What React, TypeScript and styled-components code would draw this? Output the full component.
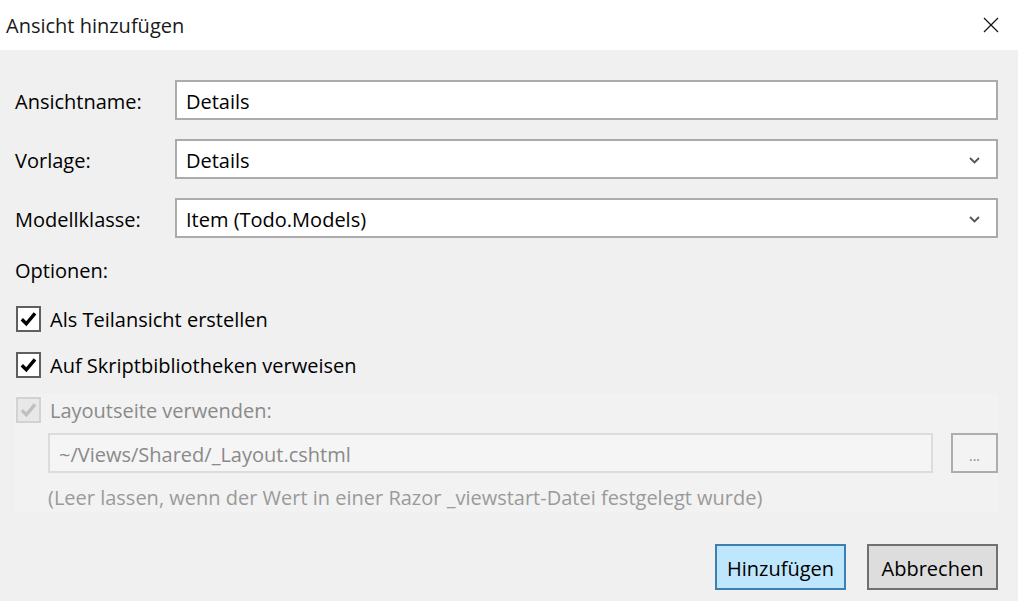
import React from "react";
import styled, { createGlobalStyle } from "styled-components";

const Global = createGlobalStyle`
  html, body { margin: 0; padding: 0; }
  body { font-family: "Open Sans", "Noto Sans", sans-serif; background: #f0f0f0; }
`;

const Dialog = styled.div`
  width: 1018px;
  height: 601px;
  display: flex;
  flex-direction: column;
  background: #f0f0f0;
  color: #000;
  overflow: hidden;
`;

const TitleBar = styled.div`
  height: 50px;
  background: #fff;
  display: flex;
  align-items: center;
  justify-content: space-between;
  padding: 0 19px 0 6px;
  box-sizing: border-box;
`;

const Title = styled.div`
  font-size: 20px;
  color: #1a1a1a;
  margin-top: 1px;
`;

const Body = styled.div`
  display: flex;
  flex-direction: column;
  padding: 30px 20px 0 15px;
`;

const FieldRow = styled.div`
  display: flex;
  align-items: center;
  height: 40px;
  margin-bottom: 19px;
`;

const Label = styled.div`
  width: 160px;
  font-size: 20px;
  padding-top: 2px;
`;

const Box = styled.div<{ $disabled?: boolean }>`
  flex: 1;
  height: 40px;
  box-sizing: border-box;
  border: 2px solid ${(p) => (p.$disabled ? "#dcdcdc" : "#ababab")};
  background: ${(p) => (p.$disabled ? "#f5f5f5" : "#fff")};
  color: ${(p) => (p.$disabled ? "#8a8a8a" : "#000")};
  display: flex;
  align-items: center;
  justify-content: space-between;
  padding: 2px 16px 0 9px;
  font-size: 20px;
`;

const Section = styled.div`
  font-size: 20px;
  margin-top: -1px;
  height: 28px;
  display: flex;
  align-items: center;
`;

const CheckRow = styled.div<{ $disabled?: boolean; $gap: number }>`
  display: flex;
  align-items: center;
  gap: 9px;
  height: 28px;
  margin-top: ${(p) => p.$gap}px;
  padding-left: 1px;
  font-size: 20px;
  color: ${(p) => (p.$disabled ? "#8a8a8a" : "#000")};
`;

const CheckBox = styled.div<{ $disabled?: boolean }>`
  width: 25px;
  height: 26px;
  box-sizing: border-box;
  border: 2px solid ${(p) => (p.$disabled ? "#d2d2d2" : "#5f5f5f")};
  background: ${(p) => (p.$disabled ? "#e8e8e8" : "#fff")};
  display: flex;
  align-items: center;
  justify-content: center;
`;

const LayoutPanel = styled.div`
  background: #f2f2f2;
  margin-top: 15px;
  padding: 0 0 2px 0;
  display: flex;
  flex-direction: column;
`;

const PathRow = styled.div`
  display: flex;
  align-items: center;
  gap: 18px;
  padding-left: 33px;
  margin-top: 9px;
`;

const DotsButton = styled.div`
  width: 47px;
  height: 40px;
  box-sizing: border-box;
  border: 2px solid #adadad;
  background: #f3f3f3;
  color: #8a8a8a;
  display: flex;
  align-items: center;
  justify-content: center;
  font-size: 14px;
  padding-top: 4px;
`;

const Hint = styled.div`
  color: #9a9a9a;
  font-size: 20px;
  padding-left: 33px;
  margin-top: 11px;
`;

const Footer = styled.div`
  display: flex;
  justify-content: flex-end;
  gap: 21px;
  margin-top: 31px;
`;

const Button = styled.div<{ $primary?: boolean }>`
  width: 131px;
  height: 46px;
  box-sizing: border-box;
  border: 2px solid ${(p) => (p.$primary ? "#3c7fb1" : "#707070")};
  background: ${(p) => (p.$primary ? "#bee6fd" : "#dddddd")};
  display: flex;
  align-items: center;
  justify-content: center;
  font-size: 20px;
  padding-top: 2px;
`;

const Check = ({ color }: { color: string }) => (
  <svg width="17" height="16" viewBox="0 0 17 16">
    <path d="M1.8 8.3 L6.3 12.8 L15 2.3" fill="none" stroke={color} strokeWidth="3.4" />
  </svg>
);

const Chevron = () => (
  <svg width="11" height="7" viewBox="0 0 11 7">
    <path d="M1 1 L5.5 5.5 L10 1" fill="none" stroke="#555" strokeWidth="1.8" />
  </svg>
);

const Close = () => (
  <svg width="16" height="16" viewBox="0 0 16 16">
    <path d="M1 1 L15 15 M15 1 L1 15" stroke="#111" strokeWidth="1.2" />
  </svg>
);

export default function App() {
  return (
    <>
      <Global />
      <Dialog>
        <TitleBar>
          <Title>Ansicht hinzufügen</Title>
          <Close />
        </TitleBar>
        <Body>
          <FieldRow>
            <Label>Ansichtname:</Label>
            <Box>Details</Box>
          </FieldRow>
          <FieldRow>
            <Label>Vorlage:</Label>
            <Box>
              Details
              <Chevron />
            </Box>
          </FieldRow>
          <FieldRow>
            <Label>Modellklasse:</Label>
            <Box>
              Item (Todo.Models)
              <Chevron />
            </Box>
          </FieldRow>
          <Section>Optionen:</Section>
          <CheckRow $gap={21}>
            <CheckBox>
              <Check color="#000" />
            </CheckBox>
            Als Teilansicht erstellen
          </CheckRow>
          <CheckRow $gap={18}>
            <CheckBox>
              <Check color="#000" />
            </CheckBox>
            Auf Skriptbibliotheken verweisen
          </CheckRow>
          <LayoutPanel>
            <CheckRow $disabled $gap={2}>
              <CheckBox $disabled>
                <Check color="#c0c0c0" />
              </CheckBox>
              Layoutseite verwenden:
            </CheckRow>
            <PathRow>
              <Box $disabled>~/Views/Shared/_Layout.cshtml</Box>
              <DotsButton>...</DotsButton>
            </PathRow>
            <Hint>(Leer lassen, wenn der Wert in einer Razor _viewstart-Datei festgelegt wurde)</Hint>
          </LayoutPanel>
          <Footer>
            <Button $primary>Hinzufügen</Button>
            <Button>Abbrechen</Button>
          </Footer>
        </Body>
      </Dialog>
    </>
  );
}
